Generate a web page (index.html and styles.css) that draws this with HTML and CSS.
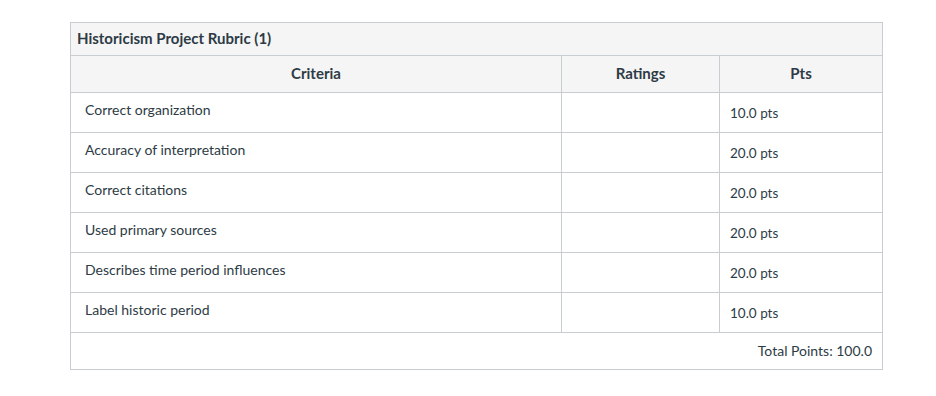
FILE: index.html
```html
<!DOCTYPE html>
<html>
<head>
<meta charset="utf-8">
<link rel="stylesheet" href="styles.css">
</head>
<body>
<div class="page">
  <table class="rubric">
    <colgroup>
      <col class="c-criteria">
      <col class="c-ratings">
      <col class="c-pts">
    </colgroup>
    <thead>
      <tr class="title-row"><th colspan="3" class="title">Historicism Project Rubric (1)</th></tr>
      <tr class="head-row">
        <th>Criteria</th>
        <th>Ratings</th>
        <th>Pts</th>
      </tr>
    </thead>
    <tbody>
      <tr><td class="crit">Correct organization</td><td></td><td class="pts">10.0 pts</td></tr>
      <tr><td class="crit">Accuracy of interpretation</td><td></td><td class="pts">20.0 pts</td></tr>
      <tr><td class="crit">Correct citations</td><td></td><td class="pts">20.0 pts</td></tr>
      <tr><td class="crit">Used primary sources</td><td></td><td class="pts">20.0 pts</td></tr>
      <tr><td class="crit">Describes time period influences</td><td></td><td class="pts">20.0 pts</td></tr>
      <tr><td class="crit">Label historic period</td><td></td><td class="pts">10.0 pts</td></tr>
    </tbody>
    <tfoot>
      <tr class="foot-row"><td colspan="3" class="total">Total Points: 100.0</td></tr>
    </tfoot>
  </table>
</div>
</body>
</html>
```
FILE: styles.css
```css
html, body {
  margin: 0;
  background: #ffffff;
}
.page {
  padding: 22px 0 0 70px;
  font-family: Lato, "Open Sans", sans-serif;
  color: #2d3b45;
}
.rubric {
  border-collapse: collapse;
  table-layout: fixed;
  width: 812px;
  font-size: 14px;
}
.c-criteria { width: 491px; }
.c-ratings { width: 158px; }
.c-pts { width: 163px; }
.rubric th, .rubric td {
  border: 1px solid #c7cdd1;
  padding: 0;
}
.title-row { height: 33px; }
.title {
  background: #f5f5f5;
  text-align: left;
  padding: 0 0 3px 6px !important;
  font-weight: 700;
  font-size: 15px;
}
.head-row { height: 37px; }
.head-row th {
  background: #f5f5f5;
  font-weight: 700;
  font-size: 15px;
  text-align: center;
  padding-bottom: 2px;
}
.rubric tbody tr { height: 40px; }
.crit {
  padding: 0 0 6px 14px !important;
  vertical-align: middle;
}
.pts {
  padding: 0 0 0 10px !important;
  vertical-align: middle;
  font-size: 13.5px;
}
.foot-row { height: 37px; }
.total {
  text-align: right;
  padding: 0 10px 1px 0 !important;
}
```
